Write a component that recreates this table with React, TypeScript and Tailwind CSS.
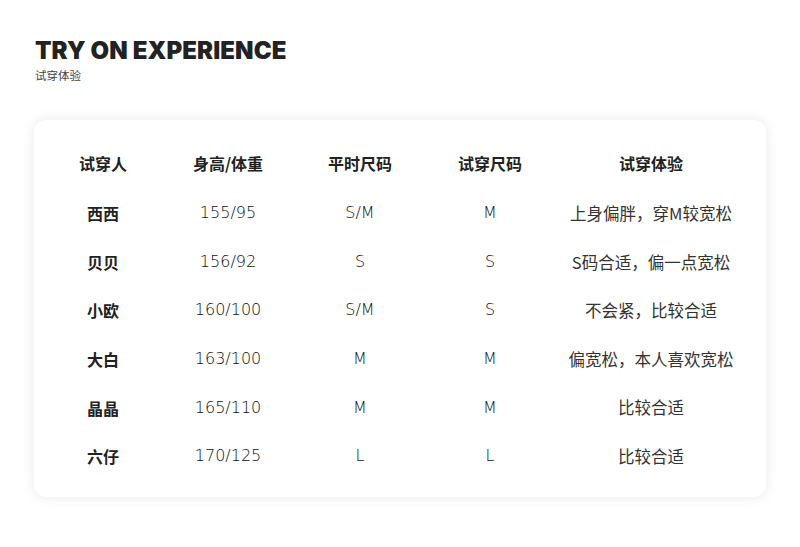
import React from 'react';

interface Row {
  name: string;
  body: string;
  usual: string;
  tried: string;
  note: string;
}

const rows: Row[] = [
  { name: '西西', body: '155/95', usual: 'S/M', tried: 'M', note: '上身偏胖，穿M较宽松' },
  { name: '贝贝', body: '156/92', usual: 'S', tried: 'S', note: 'S码合适，偏一点宽松' },
  { name: '小欧', body: '160/100', usual: 'S/M', tried: 'S', note: '不会紧，比较合适' },
  { name: '大白', body: '163/100', usual: 'M', tried: 'M', note: '偏宽松，本人喜欢宽松' },
  { name: '晶晶', body: '165/110', usual: 'M', tried: 'M', note: '比较合适' },
  { name: '六仔', body: '170/125', usual: 'L', tried: 'L', note: '比较合适' },
];

const cjk = "font-['Noto_Sans_CJK_SC','Noto_Sans',sans-serif]";
const num = "font-['DejaVu_Sans','Noto_Sans',sans-serif] font-extralight";
const cols = 'grid grid-cols-[138px_112px_152px_108px_214px] items-center text-center';

export default function App() {
  return (
    <div className={`w-[800px] h-[547px] bg-white ${cjk} text-[#2a2a2a]`}>
      <div className="pl-[35px] pt-[36px]">
        <h1 className="font-['Inter','Liberation_Sans',sans-serif] font-black text-[24px] leading-[30px] tracking-[0.1px] text-[#222]">
          TRY ON EXPERIENCE
        </h1>
        <p className="text-[11.5px] leading-[16px] mt-[1px] text-[#444]">试穿体验</p>
      </div>

      <div className="ml-[34px] mt-[37px] w-[732px] h-[377px] rounded-[12px] bg-white shadow-[0_0_14px_rgba(0,0,0,0.09)] pt-[25px]">
        <div className={`${cols} h-[36px] font-bold text-[16px] text-[#222]`}>
          <span>试穿人</span>
          <span>身高/体重</span>
          <span>平时尺码</span>
          <span>试穿尺码</span>
          <span>试穿体验</span>
        </div>
        <div className="mt-[8px]">
          {rows.map((r) => (
            <div key={r.name} className={`${cols} h-[48.6px] text-[16px]`}>
              <span className="font-bold text-[#222]">{r.name}</span>
              <span className={`${num} text-[16px] text-[#111]`}>{r.body}</span>
              <span className={`${num} text-[16px] text-[#111]`}>{r.usual}</span>
              <span className={`${num} text-[16px] text-[#111]`}>{r.tried}</span>
              <span className="text-[16.5px] text-[#333]">{r.note}</span>
            </div>
          ))}
        </div>
      </div>
    </div>
  );
}
